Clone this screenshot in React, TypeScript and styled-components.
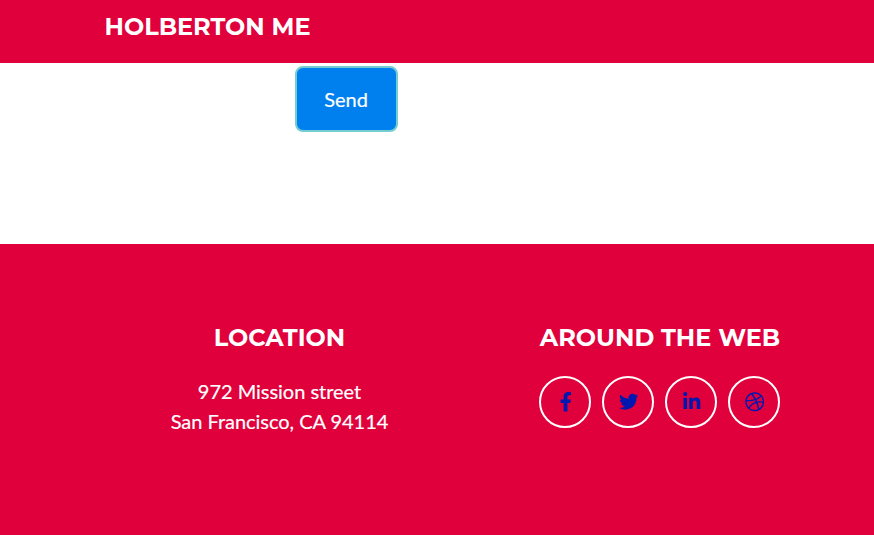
import React from "react";
import styled, { createGlobalStyle } from "styled-components";
import { FaFacebookF, FaTwitter, FaLinkedinIn, FaDribbble } from "react-icons/fa";

const Global = createGlobalStyle`
  *{box-sizing:border-box}
  body{margin:0;background:#fff;font-family:Lato,sans-serif;font-size:20px;line-height:30px;color:#fff;overflow:hidden}
`;
const Page = styled.div`height:535px;display:flex;flex-direction:column;`;
const Nav = styled.header`height:63px;background:#e0003c;padding:8px 0 0 104.5px;`;
const Brand = styled.a`display:inline-block;font:700 24px/38px Montserrat,"Open Sans",sans-serif;white-space:nowrap;`;
const Main = styled.main`height:181px;padding:3px 0 0 295px;`;
const Send = styled.button`
  width:103px;height:66px;border:2px solid #74cdd0;border-radius:8px;background:#0080ef;
  color:#fff;font:400 20px/30px Lato,sans-serif;padding:0 1px 0 0;-webkit-text-stroke:0.2px #fff;
`;
const Footer = styled.footer`
  flex:1;background:#e0003c;padding:79px 93px 0 158px;display:flex;justify-content:space-between;text-align:center;
`;
const Column = styled.section<{ $width: number }>`width:${p => p.$width}px;`;
const Heading = styled.h4`margin:0 0 24px;font:700 24px/29px Montserrat,"Open Sans",sans-serif;white-space:nowrap;`;
const Address = styled.p`margin:0;white-space:nowrap;letter-spacing:-0.03px;-webkit-text-stroke:0.2px #fff;`;
const Social = styled.div`display:flex;gap:11px;`;
const Circle = styled.a`
  width:52px;height:52px;border:2px solid #fff;border-radius:50%;color:#0018b0;
  display:flex;align-items:center;justify-content:center;padding:0 0 0 0.5px;
`;

const links = [
  { name: "Facebook", Icon: FaFacebookF },
  { name: "Twitter", Icon: FaTwitter },
  { name: "LinkedIn", Icon: FaLinkedinIn },
  { name: "Dribbble", Icon: FaDribbble },
];

export default function App() {
  return (
    <Page>
      <Global />
      <Nav><Brand>HOLBERTON ME</Brand></Nav>
      <Main><Send>Send</Send></Main>
      <Footer>
        <Column $width={243}>
          <Heading>LOCATION</Heading>
          <Address>972 Mission street<br />San Francisco, CA 94114</Address>
        </Column>
        <Column $width={242}>
          <Heading>AROUND THE WEB</Heading>
          <Social>
            {links.map(({ name, Icon }) => (
              <Circle key={name} aria-label={name}><Icon size={19.5} /></Circle>
            ))}
          </Social>
        </Column>
      </Footer>
    </Page>
  );
}
